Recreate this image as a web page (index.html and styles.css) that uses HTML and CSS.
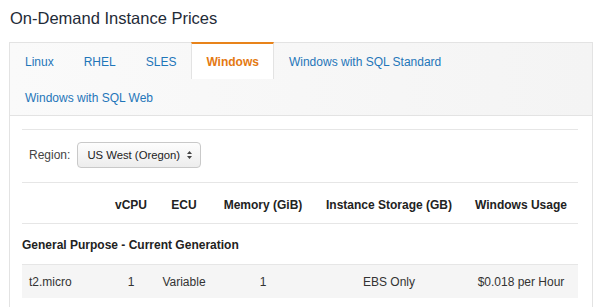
FILE: index.html
```html
<!DOCTYPE html>
<html>
<head>
<meta charset="utf-8">
<link rel="stylesheet" href="styles.css">
</head>
<body>
<h1 class="title">On-Demand Instance Prices</h1>
<div class="panel">
  <ul class="tabs">
    <li class="tab">Linux</li>
    <li class="tab">RHEL</li>
    <li class="tab">SLES</li>
    <li class="tab active">Windows</li>
    <li class="tab">Windows with SQL Standard</li>
    <li class="tab">Windows with SQL Web</li>
  </ul>
  <div class="content">
    <div class="region">
      <span class="region-label">Region:</span>
      <div class="select">
        <span>US West (Oregon)</span>
        <svg class="arrows" width="5" height="8" viewBox="0 0 5 8"><path d="M2.5 0 L5 3 L0 3 Z M0 5 L5 5 L2.5 8 Z" fill="#444"/></svg>
      </div>
    </div>
    <div class="grid head">
      <div class="c first"></div>
      <div class="c">vCPU</div>
      <div class="c">ECU</div>
      <div class="c">Memory (GiB)</div>
      <div class="c">Instance Storage (GB)</div>
      <div class="c last">Windows Usage</div>
    </div>
    <div class="section">General Purpose - Current Generation</div>
    <div class="grid row">
      <div class="c first">t2.micro</div>
      <div class="c">1</div>
      <div class="c">Variable</div>
      <div class="c">1</div>
      <div class="c">EBS Only</div>
      <div class="c last">$0.018 per Hour</div>
    </div>
  </div>
</div>
</body>
</html>
```
FILE: styles.css
```css
* { box-sizing: border-box; }
html, body { margin: 0; padding: 0; background: #fff; }
body { font-family: "Liberation Sans", Arial, sans-serif; font-size: 12px; color: #333; }
.title {
  margin: 0;
  padding: 8px 10px 0;
  font-size: 16.5px;
  line-height: 20px;
  font-weight: normal;
  color: #1f2b38;
}
.panel {
  margin: 14px 0 0 9px;
  width: 584px;
  border: 1px solid #e3e3e3;
  border-bottom: none;
}
.tabs {
  list-style: none;
  margin: 0;
  padding: 0;
  display: flex;
  flex-wrap: wrap;
  background: linear-gradient(to right, #fafafa, #f4f4f4);
  border-bottom: 1px solid #e3e3e3;
}
.tab {
  padding: 2px 15px 0;
  height: 36px;
  line-height: 34px;
  color: #1f76b9;
  white-space: nowrap;
}
.tab.active {
  margin-top: -1px;
  height: 37px;
  padding: 1px 14px 0;
  line-height: 34px;
  background: #fff;
  border-top: 2px solid #e8831a;
  border-left: 1px solid #e3e3e3;
  border-right: 1px solid #e3e3e3;
  color: #e47911;
  font-weight: bold;
}
.content {
  background: #fff;
  padding: 13px 14px 20px 12px;
}
.region {
  display: flex;
  align-items: center;
  gap: 7px;
  padding: 12px 0 14px 7px;
  border-top: 1px solid #e6e6e6;
  border-bottom: 1px solid #e6e6e6;
  color: #444;
}
.select {
  display: flex;
  align-items: center;
  justify-content: space-between;
  width: 124px;
  height: 26px;
  padding: 0 8px 0 9px;
  border: 1px solid #c9c9c9;
  border-radius: 4px;
  background: linear-gradient(#fdfdfd, #ededed);
  font-size: 11.3px;
  color: #222;
}
.arrows { display: block; }
.grid {
  display: grid;
  grid-template-columns: 78px 62px 44px 114px 138px 120px;
}
.c { text-align: center; white-space: nowrap; }
.c.first { text-align: left; padding-left: 7px; }
.c.last { padding-left: 6px; }
.head {
  height: 41px;
  align-items: end;
  padding-bottom: 11px;
  line-height: 14px;
  font-weight: bold;
  color: #222;
  border-bottom: 1px solid #e6e6e6;
}
.section {
  padding: 14px 0 12px;
  line-height: 14px;
  font-weight: bold;
  color: #222;
}
.row {
  height: 34px;
  align-items: center;
  background: #f5f5f5;
  border-top: 1px solid #e6e6e6;
  color: #333;
}
```
